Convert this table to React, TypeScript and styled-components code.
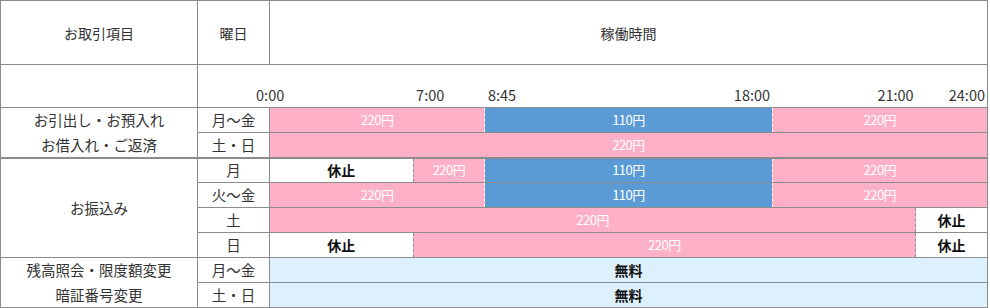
import React from "react";
import styled, { createGlobalStyle } from "styled-components";

type Kind = "pink" | "blue" | "white" | "free";

type Seg = {
  span: number;
  kind: Kind;
  label: string;
};

type DayRow = {
  day: string;
  segs: Seg[];
};

type Group = {
  names: string[];
  merged?: string;
  rows: DayRow[];
};

const fill: Record<Kind, string> = {
  pink: "#feb1c6",
  blue: "#5b9bd5",
  white: "#ffffff",
  free: "#ddf0fd",
};

const GRID = "#8c8c8c";

const groups: Group[] = [
  {
    names: ["お引出し・お預入れ", "お借入れ・ご返済"],
    rows: [
      {
        day: "月〜金",
        segs: [
          { span: 3, kind: "pink", label: "220円" },
          { span: 4, kind: "blue", label: "110円" },
          { span: 3, kind: "pink", label: "220円" },
        ],
      },
      { day: "土・日", segs: [{ span: 10, kind: "pink", label: "220円" }] },
    ],
  },
  {
    names: [],
    merged: "お振込み",
    rows: [
      {
        day: "月",
        segs: [
          { span: 2, kind: "white", label: "休止" },
          { span: 1, kind: "pink", label: "220円" },
          { span: 4, kind: "blue", label: "110円" },
          { span: 3, kind: "pink", label: "220円" },
        ],
      },
      {
        day: "火〜金",
        segs: [
          { span: 3, kind: "pink", label: "220円" },
          { span: 4, kind: "blue", label: "110円" },
          { span: 3, kind: "pink", label: "220円" },
        ],
      },
      {
        day: "土",
        segs: [
          { span: 9, kind: "pink", label: "220円" },
          { span: 1, kind: "white", label: "休止" },
        ],
      },
      {
        day: "日",
        segs: [
          { span: 2, kind: "white", label: "休止" },
          { span: 7, kind: "pink", label: "220円" },
          { span: 1, kind: "white", label: "休止" },
        ],
      },
    ],
  },
  {
    names: ["残高照会・限度額変更", "暗証番号変更"],
    rows: [
      { day: "月〜金", segs: [{ span: 10, kind: "free", label: "無料" }] },
      { day: "土・日", segs: [{ span: 10, kind: "free", label: "無料" }] },
    ],
  },
];

const GlobalStyle = createGlobalStyle`
  body {
    margin: 0;
    background: #fff;
    font-family: "Noto Sans CJK JP", "Noto Sans", sans-serif;
  }
`;

const App: React.FC = () => {
  return (
    <>
      <GlobalStyle />
      <Table>
        <colgroup>
          <col style={{ width: 197 }} />
          <col style={{ width: 72 }} />
          {Array.from({ length: 10 }).map((_, i) => (
            <col key={i} />
          ))}
        </colgroup>
        <tbody>
          <HeadRow>
            <HeadCell>お取引項目</HeadCell>
            <HeadCell>曜日</HeadCell>
            <HeadCell colSpan={10}>稼働時間</HeadCell>
          </HeadRow>
          <TimeRow>
            <HeadCell />
            <TimeCell colSpan={2} $align="center">0:00</TimeCell>
            <TimeCell />
            <TimeCell $align="left">7:00</TimeCell>
            <TimeCell $align="left">8:45</TimeCell>
            <TimeCell />
            <TimeCell />
            <TimeCell $align="right">18:00</TimeCell>
            <TimeCell />
            <TimeCell $align="right">21:00</TimeCell>
            <TimeCell $align="right">24:00</TimeCell>
          </TimeRow>
          {groups.map((g, gi) =>
            g.rows.map((r, ri) => {
              const thick = gi === 1 && ri === 0;
              return (
                <DataRow key={`${gi}-${ri}`}>
                  {g.merged ? (
                    ri === 0 && (
                      <NameCell rowSpan={g.rows.length} $thick={thick}>
                        {g.merged}
                      </NameCell>
                    )
                  ) : (
                    <NameCell
                      $thick={thick}
                      $joinBelow={ri < g.rows.length - 1}
                      $joinAbove={ri > 0}
                    >
                      {g.names[ri]}
                    </NameCell>
                  )}
                  <DayCell $thick={thick}>{r.day}</DayCell>
                  {r.segs.map((s, si) => {
                    const prev = si > 0 ? r.segs[si - 1].kind : null;
                    const divider =
                      prev === null
                        ? null
                        : prev === "white" || s.kind === "white"
                        ? GRID
                        : "#ffffff";
                    return (
                      <SegCell
                        key={si}
                        colSpan={s.span}
                        $kind={s.kind}
                        $divider={divider}
                        $thick={thick}
                      >
                        {s.label}
                      </SegCell>
                    );
                  })}
                </DataRow>
              );
            })
          )}
        </tbody>
      </Table>
    </>
  );
};

export default App;

const Table = styled.table`
  width: 988px;
  border-collapse: collapse;
  table-layout: fixed;
  border: 1px solid ${GRID};
  color: #333;
`;

const HeadRow = styled.tr`
  height: 64px;
`;

const TimeRow = styled.tr`
  height: 43px;
`;

const DataRow = styled.tr`
  height: 25px;
`;

const HeadCell = styled.td`
  border: 1px solid ${GRID};
  text-align: center;
  vertical-align: middle;
  font-size: 14px;
  padding: 0;
`;

const TimeCell = styled.td<{ $align?: "left" | "center" | "right" }>`
  border-top: 1px solid ${GRID};
  border-bottom: 1px solid ${GRID};
  text-align: ${(p) => p.$align || "left"};
  vertical-align: bottom;
  font-size: 14.5px;
  line-height: 20px;
  padding: 0 2px 2px 3px;
  white-space: nowrap;
`;

const NameCell = styled.td<{
  $thick?: boolean;
  $joinBelow?: boolean;
  $joinAbove?: boolean;
}>`
  border: 1px solid ${GRID};
  ${(p) => p.$thick && `border-top: 2px solid ${GRID};`}
  ${(p) => p.$joinBelow && "border-bottom: none;"}
  ${(p) => p.$joinAbove && "border-top: none;"}
  text-align: center;
  vertical-align: middle;
  font-size: 14.5px;
  line-height: 22px;
  padding: 0;
  white-space: nowrap;
`;

const DayCell = styled.td<{ $thick?: boolean }>`
  border: 1px solid ${GRID};
  ${(p) => p.$thick && `border-top: 2px solid ${GRID};`}
  text-align: center;
  font-size: 14.5px;
  line-height: 22px;
  padding: 0;
`;

const SegCell = styled.td<{
  $kind: Kind;
  $divider: string | null;
  $thick?: boolean;
}>`
  background: ${(p) => fill[p.$kind]};
  border-top: ${(p) => (p.$thick ? 2 : 1)}px solid ${GRID};
  border-bottom: 1px solid ${GRID};
  border-left: ${(p) => (p.$divider ? `1px dashed ${p.$divider}` : "none")};
  text-align: center;
  padding: 0;
  line-height: 22px;
  white-space: nowrap;
  font-size: ${(p) => (p.$kind === "white" || p.$kind === "free" ? "14px" : "13px")};
  font-weight: ${(p) => (p.$kind === "white" || p.$kind === "free" ? 700 : 400)};
  color: ${(p) => (p.$kind === "white" || p.$kind === "free" ? "#111" : "#fff")};
  letter-spacing: ${(p) => (p.$kind === "pink" || p.$kind === "blue" ? "-0.5px" : "0")};
`;
